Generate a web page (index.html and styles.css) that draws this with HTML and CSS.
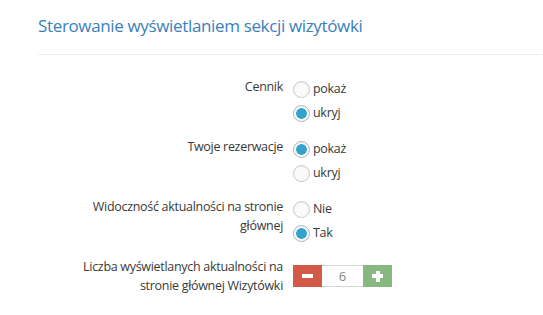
FILE: index.html
```html
<!DOCTYPE html>
<html lang="pl">
<head>
    <meta charset="UTF-8">
    <title>Sterowanie wyświetlaniem sekcji wizytówki</title>
    <link rel="stylesheet" href="styles.css">
</head>
<body>
    <div class="page-header">
        <h1>Sterowanie wyświetlaniem sekcji wizytówki</h1>
    </div>
    <form class="form-horizontal">
        <div class="form-group">
            <div class="control-label">Cennik</div>
            <div class="controls">
                <label class="option"><span class="radio"></span>pokaż</label>
                <label class="option"><span class="radio checked"></span>ukryj</label>
            </div>
        </div>
        <div class="form-group">
            <div class="control-label">Twoje rezerwacje</div>
            <div class="controls">
                <label class="option"><span class="radio checked"></span>pokaż</label>
                <label class="option"><span class="radio"></span>ukryj</label>
            </div>
        </div>
        <div class="form-group">
            <div class="control-label">Widoczność aktualności na stronie głównej</div>
            <div class="controls">
                <label class="option"><span class="radio"></span>Nie</label>
                <label class="option"><span class="radio checked"></span>Tak</label>
            </div>
        </div>
        <div class="form-group last">
            <div class="control-label">Liczba wyświetlanych aktualności na stronie głównej Wizytówki</div>
            <div class="controls">
                <div class="spinner">
                    <button type="button" class="btn btn-minus"><span class="bar"></span></button>
                    <input type="text" class="spinner-input" value="6">
                    <button type="button" class="btn btn-plus"><span class="bar"></span><span class="bar vertical"></span></button>
                </div>
            </div>
        </div>
    </form>
</body>
</html>
```

FILE: styles.css
```css
* {
    margin: 0;
    padding: 0;
    box-sizing: border-box;
}
body {
    background-color: #fff;
    font-family: "Open Sans", "Liberation Sans", sans-serif;
    font-size: 12.5px;
    letter-spacing: -0.3px;
    color: #393939;
}
.page-header {
    margin-left: 38px;
    padding: 16px 0 18px;
    border-bottom: 1px dotted #e2e2e2;
}
.page-header h1 {
    font-size: 17px;
    letter-spacing: -0.35px;
    line-height: 20px;
    font-weight: 400;
    color: #3a7fbb;
}
.form-horizontal {
    padding-top: 21px;
}
.form-group {
    display: flex;
    gap: 10px;
    margin-bottom: 12px;
}
.form-group.last {
    margin-top: 6px;
}
.control-label {
    width: 208px;
    margin-left: 75px;
    text-align: right;
    line-height: 19px;
    padding-top: 1px;
}
.controls {
    display: flex;
    flex-direction: column;
}
.option {
    display: flex;
    align-items: center;
    height: 24px;
    gap: 3px;
}
.radio {
    width: 17px;
    height: 17px;
    border: 1px solid #c8c8c8;
    border-radius: 50%;
    background-color: #fafafa;
    box-shadow: inset 0 1px 1px rgba(0, 0, 0, 0.05);
    margin-top: 2px;
}
.radio.checked {
    border-color: #adb8c0;
    background: radial-gradient(circle, #32a3ce 0, #32a3ce 5px, #fafafa 5.6px);
}
.spinner {
    display: flex;
    height: 22px;
    margin-top: 9px;
}
.btn {
    width: 29px;
    height: 22px;
    border: none;
    display: flex;
    justify-content: center;
    align-items: center;
    position: relative;
}
.btn-minus {
    background-color: #d15b47;
}
.btn-plus {
    background-color: #87b87f;
}
.bar {
    width: 11px;
    height: 4px;
    background-color: #fff;
}
.bar.vertical {
    position: absolute;
    width: 4px;
    height: 11px;
}
.spinner-input {
    width: 41px;
    height: 22px;
    border: 1px solid #d5d5d5;
    border-left: none;
    border-right: none;
    text-align: center;
    font-family: "Open Sans", "Liberation Sans", sans-serif;
    font-size: 13px;
    color: #858585;
    outline: none;
}
```
